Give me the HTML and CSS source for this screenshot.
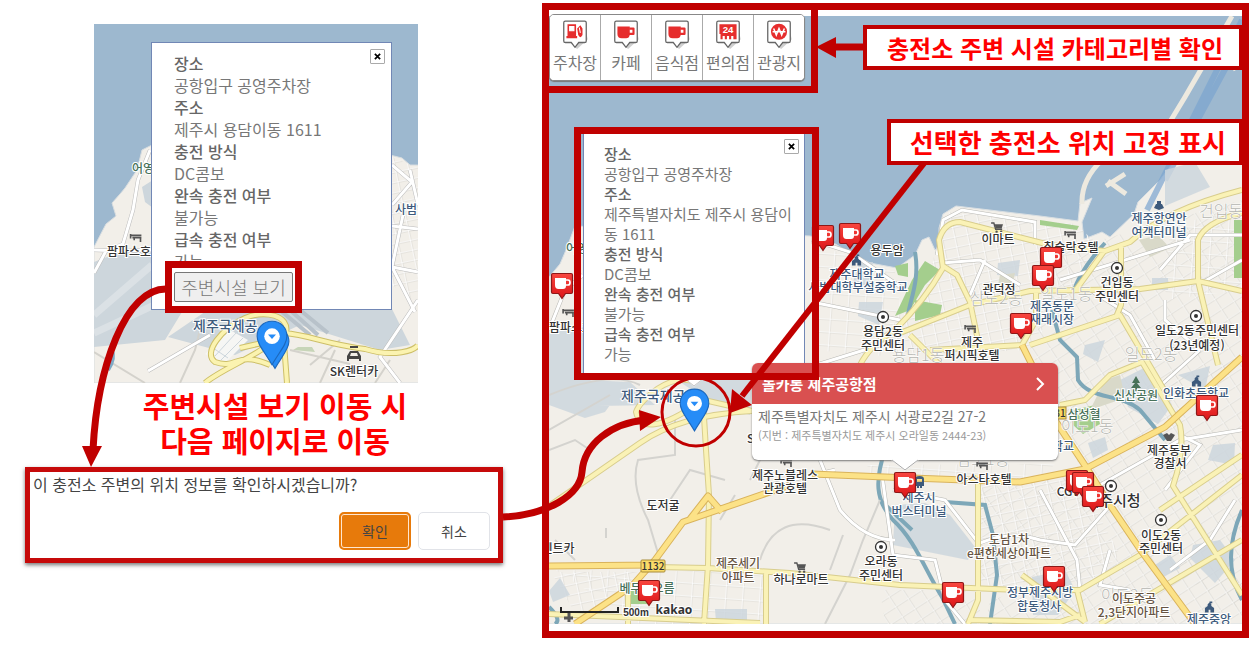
FILE: index.html
```html
<!DOCTYPE html>
<html lang="ko">
<head>
<meta charset="utf-8">
<title>충전소 주변 시설 안내</title>
<link rel="stylesheet" href="styles.css">
</head>
<body>
<svg class="defs" aria-hidden="true">
  <defs>
    <linearGradient id="red" x1="0" y1="0" x2="0" y2="1"><stop offset="0" stop-color="#f8463f"/><stop offset="1" stop-color="#dc1518"/></linearGradient>
    <pattern id="gridA" width="13" height="10" patternUnits="userSpaceOnUse" patternTransform="rotate(-12)"><path d="M0 0H13M0 0V10" stroke="#dcdad4" stroke-width="3"/><path d="M0 0H13M0 0V10" stroke="#fff" stroke-width="1.6"/></pattern>
    <pattern id="gridB" width="15" height="12" patternUnits="userSpaceOnUse" patternTransform="rotate(-33)"><path d="M0 0H15M0 0V12" stroke="#d9d7d1" stroke-width="3"/><path d="M0 0H15M0 0V12" stroke="#fbfaf8" stroke-width="1.5"/></pattern>
    <pattern id="gridC" width="17" height="13" patternUnits="userSpaceOnUse" patternTransform="rotate(4)"><path d="M0 0H17M0 0V13" stroke="#dddbd6" stroke-width="3"/><path d="M0 0H17M0 0V13" stroke="#fff" stroke-width="1.6"/></pattern>
    <symbol id="cup" viewBox="0 0 24 28" overflow="visible">
      <path d="M3 1.500H21Q22.500 1.500 22.500 3V20Q22.500 21.500 21 21.500H15.500L12 26.500L8.500 21.500H3Q1.500 21.500 1.500 20V3Q1.500 1.500 3 1.500Z" fill="url(#red)" stroke="#8e1717" stroke-width="1.200"/>
      <path d="M5 6H16V14Q16 17 13 17H8.500Q5 17 5 13Z" fill="#fff"/><path d="M16 8H18Q20 8 20 10.500Q20 13 18 13H16" fill="none" stroke="#fff" stroke-width="1.700"/>
    </symbol>
    <symbol id="office" viewBox="0 0 14 14"><circle cx="7" cy="7" r="5.500" fill="#fff" stroke="#333" stroke-width="1.300"/><circle cx="7" cy="7" r="2" fill="#333"/></symbol>
    <symbol id="bed" viewBox="0 0 14 10"><path d="M1 0V5M1 1.500H13M3 4H13M12 4V9M5 4V7" fill="none" stroke="#555" stroke-width="1.800"/></symbol>
    <symbol id="cart" viewBox="0 0 14 12"><path d="M0 1H3L5 8H12" fill="none" stroke="#555" stroke-width="1.600"/><path d="M4 2.500H13L11.500 7H5Z" fill="#555"/><circle cx="6" cy="10.500" r="1.300" fill="#555"/><circle cx="11" cy="10.500" r="1.300" fill="#555"/></symbol>
    <symbol id="school" viewBox="0 0 12 12"><path d="M1 12V7L4 5V3L6 1V0H9V2H7L8 3V5L11 7V12H7V9H5V12Z" fill="#3d5a7c"/></symbol>
    <symbol id="pin" viewBox="0 0 28 40"><path d="M14 1C6 1 1 7 1 14C1 21 7 27 14 39C21 27 27 21 27 14C27 7 22 1 14 1Z" fill="#268cf7" stroke="#1c68bd" stroke-width="1"/><circle cx="14" cy="14" r="6.800" fill="#fff"/><path d="M10.500 12.500H17.500L14 16.500Z" fill="#268cf7"/></symbol>
    <symbol id="badge" viewBox="0 0 24 28"><path d="M10 24L21 6L24 18L14 27Z" fill="#777" opacity=".35"/><path d="M3 1H21Q22.500 1 22.500 2.500V19.500Q22.500 21 21 21H15.500L12 25.500L8.500 21H3Q1.500 21 1.500 19.500V2.500Q1.500 1 3 1Z" fill="#fff" stroke="#666" stroke-width="1.200"/></symbol>
    <symbol id="beak" viewBox="0 0 30 12"><path d="M0 0H30L15 12Z" fill="#fff"/><path d="M2 1L15 11L28 1" fill="none" stroke="#aaa" stroke-width="1"/></symbol>
  </defs>
</svg>

<main class="board">
  <section class="intro">
    <div class="mini-map">
      <svg class="map-art" viewBox="94 24 324 359" preserveAspectRatio="xMinYMin slice" aria-hidden="true">
        <path d="M94 24H900V383H94Z" fill="#9db8cf"/>
        <path d="M152 145L142 150L137 170L125 188L120 194L112 203L116 216L106 224L94 247V383H900V170L410 165L402 158L390 155Z" fill="#f2efe9" stroke="#d8dde0"/>
        <path d="M392 157L418 168V305L392 285Z" fill="url(#gridA)"/>
        <path d="M94 262L125 250L152 252V290L185 307L165 340L94 347ZM142 187L153 180V208L145 202Z" fill="#cdd6dc"/>
        <path d="M94 315L152 265M94 333L165 300" stroke="#dbe1e5" stroke-width="7"/>
        <path d="M168 337L215 305H300L392 309L410 345L380 350L300 325L235 355Z" fill="#cdd6dc"/>
        <path d="M205 354L230 330L248 340L225 363Z" fill="#f6f6f4"/><path d="M215 356L236 333M221 360L243 338M210 346L228 358" stroke="#cdd6dc" stroke-width="1"/>
        <path d="M280 310L310 335M290 310L318 335M300 310L328 333" stroke="#b8c2ca" stroke-width="4"/>
        <path d="M298 347H312L315 352L293 350Z" fill="#c7d5b8"/>
        <path d="M180 383L195 350L200 330M290 350L350 364M94 352L145 383M320 383L335 350M390 360L375 383M340 340L310 365" fill="none" stroke="#d4d2cc" stroke-width="2"/>
        <path d="M150 150L138 180L133 210L123 244L106 251L94 273M94 250L123 251L151 250M148 371L210 335M392 226L418 229M392 267L418 272M403 215L392 267L415 312M418 300L380 357L400 383M392 165L412 182L392 205M410 170L418 205" fill="none" stroke="#bbb" stroke-width="4"/>
        <path d="M150 150L138 180L133 210L123 244L106 251L94 273M94 250L123 251L151 250M148 371L210 335M392 226L418 229M392 267L418 272M403 215L392 267L415 312M418 300L380 357L400 383M392 165L412 182L392 205M410 170L418 205" fill="none" stroke="#fff" stroke-width="3"/>
        <path d="M205 383C225 366 270 352 278 333M270 365C235 350 238 370 215 362C202 353 222 328 245 318C265 310 290 315 286 333L280 345M283 330L287 383M284 333C310 335 325 344 365 349C395 358 415 350 418 345M240 348L275 340" fill="none" stroke="#cdbf68" stroke-width="6"/>
        <path d="M205 383C225 366 270 352 278 333M270 365C235 350 238 370 215 362C202 353 222 328 245 318C265 310 290 315 286 333L280 345M283 330L287 383M284 333C310 335 325 344 365 349C395 358 415 350 418 345M240 348L275 340" fill="none" stroke="#fbf3b0" stroke-width="4"/>
        <path d="M108 370Q116 358 111 348" stroke="#7fa9c5" stroke-width="4" fill="none"/>
        <g class="label">
          <text x="132" y="173" class="green start">어영</text><use href="#bed" x="129" y="234" width="14" height="9"/>
          <text x="107" y="256" class="start">팜파스호</text><text x="395" y="214" class="navy start">사범</text>
          <text x="193" y="331" class="navy start big">제주국제공</text><text x="354" y="376">SK렌터카</text>
          <path d="M347 361V356L350 351H358L361 356V361H359V359H349V361ZM351 353L350 356H358L357 353ZM350 346H358V348H350Z" fill="#444" fill-rule="evenodd"/>
        </g>
        <use href="#pin" x="260" y="325" width="30" height="46"/><use href="#pin" x="256" y="318" width="32" height="50"/>
      </svg>
      <article class="popup popup-small">
        <button class="close" type="button" aria-label="닫기"><svg viewBox="0 0 8 8"><path d="M1 1L7 7M7 1L1 7"/></svg></button>
        <dl>
          <dt>장소</dt><dd>공항입구 공영주차장</dd><dt>주소</dt><dd>제주시 용담이동 1611</dd><dt>충전 방식</dt><dd>DC콤보</dd><dt>완속 충전 여부</dt><dd>불가능</dd><dt>급속 충전 여부</dt><dd>가능</dd>
        </dl>
        <div class="focus"><button type="button">주변시설 보기</button></div>
      </article>
    </div>
    <h1>주변시설 보기 이동 시<br>다음 페이지로 이동</h1>
    <div class="dialog" role="dialog" aria-labelledby="question">
      <p id="question">이 충전소 주변의 위치 정보를 확인하시겠습니까?</p>
      <div class="actions"><button class="ok" type="button">확인</button><button class="cancel" type="button">취소</button></div>
    </div>
  </section>

  <section class="explorer">
    <div class="main-map">
      <svg class="map-art" viewBox="549 16 693 608" preserveAspectRatio="xMinYMin slice" aria-hidden="true">
        <path d="M549 16H2000V624H549Z" fill="#9db8cf"/>
        <path d="M549 277L560 264L566 250L575 226L810 236L827 239L842 248L870 263L897 268L915 255L922 240L929 237L935 250L939 246V228L943 214L956 206L1040 216L1078 221L1080 203L1092 198L1082 222L1084 239L1102 232L1110 237L1134 214L1138 202L1160 180L1172 164H2000V624H549Z" fill="#f2efe9" stroke="#d8dee2"/>
        <path d="M1232 16L1185 97L1165 130M1230 60L1236 70M1102 160Q1081 180 1082 204M1108 181L1126 194M1125 174L1106 186" fill="none" stroke="#ede9df" stroke-width="5"/>
        <path d="M1242 20L1147 210M1230 60L1165 180" stroke="#7ba5d0" stroke-width="6" opacity=".7"/>
        <path d="M812 243L895 272L908 358L812 350Z" fill="url(#gridC)"/>
        <path d="M945 212L1075 224L1100 246L1030 350L900 355L888 330L925 293Z" fill="url(#gridA)"/>
        <path d="M1065 250L1242 200V360L1165 400L1060 410L1030 350Z" fill="url(#gridB)"/>
        <path d="M1170 225L1242 210V290L1165 300Z" fill="url(#gridC)"/>
        <path d="M1058 405L1242 360V610L1150 560L1080 585L980 580V490L1080 470Z" fill="url(#gridB)"/>
        <path d="M975 482L1080 480L1120 555L1080 590L978 585Z" fill="url(#gridA)"/>
        <path d="M867 465L1055 464L1040 480L870 475Z" fill="url(#gridC)"/>
        <path d="M555 570L765 572V624H640Z" fill="url(#gridC)"/><path d="M551 572H650L580 622Z" fill="url(#gridA)"/>
        <path d="M880 590H980V624H885ZM990 600L1170 550L1242 580V624H985Z" fill="url(#gridB)"/>
        <path d="M549 333L585 326V380L630 382L655 405L597 406L600 411L549 405ZM549 405L585 373L610 405L605 412L585 418ZM700 378L752 380L750 415L710 402L680 382ZM860 262H873L870 290H850ZM859 302H883L879 325L858 316ZM998 263L1020 260L1018 276L997 275ZM1085 345L1105 340L1098 362L1083 354ZM1152 278H1168V290H1152ZM1120 380L1150 365L1172 405L1158 424L1128 407ZM1178 375L1210 366L1205 390ZM1088 443L1105 437L1108 450L1093 458ZM1213 445L1235 443L1234 465L1208 460ZM895 505L925 503L950 515L975 547L968 560L893 545ZM1032 577L1065 570L1075 590L1058 615H1033ZM1193 545L1220 540L1235 560L1215 583L1190 558ZM549 591L560 578L570 595L553 602ZM715 609H747V622H716ZM1155 565L1170 555L1180 568L1163 577ZM1165 170L1195 162L1210 187L1165 206Z" fill="#ccd6dd" opacity=".85"/>
        <path d="M925 261L940 270L925 285L910 310L895 316L912 280ZM915 300L942 305L940 315L915 321ZM1040 220L1079 226L1077 230L1040 225ZM1234 220H2000V278H1234ZM1074 410L1095 405L1100 424L1083 434L1073 425ZM630 590H648V604H630ZM895 266L908 263V277L898 275Z" fill="#a4ce8d"/>
        <path d="M1105 380L1120 375L1125 398L1090 410ZM1000 275L1015 273L1012 285H998ZM1139 240L1158 235L1170 248L1150 257Z" fill="#d9d9c9"/>
        <path d="M915 252C920 280 910 300 908 315M1105 243Q1080 270 1073 293M1052 310L1060 340L1077 357L1078 380C1090 400 1120 393 1140 410L1165 440M885 450C875 480 875 500 893 520C915 540 925 570 942 597L955 624M945 502L985 505L993 535L997 575L990 624M1242 510Q1220 560 1242 600M549 607Q562 620 555 624M880 500L912 530" fill="none" stroke="#7da7b8" stroke-width="4"/>
        <path d="M549 430L610 395M549 450L575 440L590 450M675 415V455L638 460Q630 485 648 520L660 560M549 395Q610 370 640 385M606 528V538M735 495L720 520M830 530Q775 510 760 560M843 535L830 570M880 500L863 540L850 575L825 624M575 560L555 540M725 480L690 470L670 500M765 450L750 480" fill="none" stroke="#d4d3cf" stroke-width="2"/>
        <path d="M549 330L565 290L583 275M812 240L850 252L905 290M812 302L900 320M985 260L970 295M1035 245V222L962 210L943 220L937 255M1020 285L980 260L942 263M1090 290L1130 315L1155 360M1060 280L1190 240M1160 270L1190 235H1242M1165 300V320L1200 350M1205 281L1242 260M1200 350L1150 395M800 370L890 342M820 460L840 510Q865 540 895 540M882 475L893 555L935 560L945 600L965 624M893 490L945 500L980 545M980 543Q1010 530 1040 540L1075 545L1115 500M1040 490L1077 560L1080 590M1100 485L1180 440L1242 430M1180 435L1200 445L1165 490M1110 550L1100 585L1130 590M1170 570L1210 540L1235 500M770 485L835 470" fill="none" stroke="#b8b8b4" stroke-width="4"/>
        <path d="M549 330L565 290L583 275M812 240L850 252L905 290M812 302L900 320M985 260L970 295M1035 245V222L962 210L943 220L937 255M1020 285L980 260L942 263M1090 290L1130 315L1155 360M1060 280L1190 240M1160 270L1190 235H1242M1165 300V320L1200 350M1205 281L1242 260M1200 350L1150 395M800 370L890 342M820 460L840 510Q865 540 895 540M882 475L893 555L935 560L945 600L965 624M893 490L945 500L980 545M980 543Q1010 530 1040 540L1075 545L1115 500M1040 490L1077 560L1080 590M1100 485L1180 440L1242 430M1180 435L1200 445L1165 490M1110 550L1100 585L1130 590M1170 570L1210 540L1235 500M770 485L835 470" fill="none" stroke="#fff" stroke-width="3"/>
        <g fill="none" stroke-linejoin="round">
          <path d="M549 506L640 443Q680 415 752 411M703 400L706 450L709 495L708 565L704 624M695 382C670 372 640 400 636 412C640 430 660 430 700 402M704 400L752 411M860 365Q870 345 895 330Q925 300 943 268L939 240Q944 222 960 222L1050 245L1105 251L1130 242Q1165 210 1242 190M943 266L957 275L970 302L980 350M895 335L970 305L1030 291L1140 289L1198 281L1242 291M1036 291V320L1022 345L930 350M910 335L940 365M1030 345L1120 315L1170 400M1105 250L1075 291M1121 245V305L1116 317M1198 281V240Q1205 222 1242 213M1198 281L1218 365M1060 405L1085 400L1110 375L1142 362L1180 425Q1185 450 1173 486L1242 595M978 475V600L968 624M655 567L708 568L790 573L900 585L1020 590H1080L1140 555L1242 475M1022 575L1085 622M1077 590L1085 622M968 620L1060 622L1080 615M1100 624L1242 540M549 614L760 623M628 590V624M766 570V624M1160 510L1242 455" stroke="#d8cd8d" stroke-width="6"/>
          <path d="M549 506L640 443Q680 415 752 411M703 400L706 450L709 495L708 565L704 624M695 382C670 372 640 400 636 412C640 430 660 430 700 402M704 400L752 411M860 365Q870 345 895 330Q925 300 943 268L939 240Q944 222 960 222L1050 245L1105 251L1130 242Q1165 210 1242 190M943 266L957 275L970 302L980 350M895 335L970 305L1030 291L1140 289L1198 281L1242 291M1036 291V320L1022 345L930 350M910 335L940 365M1030 345L1120 315L1170 400M1105 250L1075 291M1121 245V305L1116 317M1198 281V240Q1205 222 1242 213M1198 281L1218 365M1060 405L1085 400L1110 375L1142 362L1180 425Q1185 450 1173 486L1242 595M978 475V600L968 624M655 567L708 568L790 573L900 585L1020 590H1080L1140 555L1242 475M1022 575L1085 622M1077 590L1085 622M968 620L1060 622L1080 615M1100 624L1242 540M549 614L760 623M628 590V624M766 570V624M1160 510L1242 455" stroke="#faf2b6" stroke-width="4"/>
          <path d="M549 566L655 565M575 624L632 586L655 560L683 522L790 485M690 519L708 496L722 512M812 474L885 477L1020 482L1085 469L1165 427L1242 357M1045 405L1088 470L1110 505L1142 552L1195 624M1022 345L1032 365" stroke="#d9b35c" stroke-width="7"/>
          <path d="M549 566L655 565M575 624L632 586L655 560L683 522L790 485M690 519L708 496L722 512M812 474L885 477L1020 482L1085 469L1165 427L1242 357M1045 405L1088 470L1110 505L1142 552L1195 624M1022 345L1032 365" stroke="#fce287" stroke-width="5"/>
        </g>
        <g class="ghost"><text x="996" y="304">삼도2동</text><text x="1066" y="300">일도1동</text><text x="918" y="361">용담1동</text><text x="1151" y="360">일도2동</text><text x="1221" y="217">건입동</text><text x="1087" y="432">이도1동</text><text x="1127" y="601">이도2동</text><text x="983" y="465">삼도1동</text></g>
        <g class="label">
          <text x="566" y="253" class="green start">어영</text><use href="#bed" x="562" y="309" width="13" height="9"/><text x="571" y="332">팜파스호</text>
          <text x="887" y="255">용두암</text><use href="#school" x="851" y="254" width="11" height="12"/><text x="857" y="279" class="navy">제주대학교</text><text x="858" y="292" class="navy">사범대학부설중학교</text>
          <use href="#office" x="876" y="310" width="14" height="14"/><text x="883" y="336">용담2동</text><text x="883" y="350">주민센터</text>
          <use href="#cart" x="991" y="222" width="13" height="11"/><text x="998" y="244">이마트</text><use href="#bed" x="1064" y="231" width="13" height="9"/><text x="1071" y="252">칠슬락호텔</text>
          <text x="999" y="294">관덕정</text><text x="1052" y="311" class="navy">제주동문</text><text x="1052" y="324" class="navy">재래시장</text>
          <use href="#bed" x="964" y="325" width="13" height="9"/><text x="972" y="347">제주</text><text x="972" y="360">퍼시픽호텔</text>
          <path d="M1154 208L1159 210L1164 208L1162 204H1156ZM1157 201H1161V204H1157Z" fill="#3d5a7c"/><text x="1159" y="223" class="navy">제주항연안</text><text x="1159" y="237" class="navy">여객터미널</text>
          <use href="#office" x="1110" y="261" width="14" height="14"/><text x="1117" y="287">건입동</text><text x="1117" y="301">주민센터</text>
          <use href="#office" x="1189" y="309" width="14" height="14"/><text x="1197" y="335">일도2동주민센터</text><text x="1197" y="350">(23년예정)</text>
          <text x="621" y="401" class="navy start big">제주국제공</text><text x="747" y="443" class="start">SK렌터카</text><use href="#bed" x="780" y="459" width="13" height="9"/>
          <text x="785" y="480">제주노블레스</text><text x="785" y="493">관광호텔</text><text x="663" y="510">도저굴</text><text x="558" y="553">렌트카</text>
          <path d="M1136 376L1132 383H1135L1131 388H1135V391H1137V388H1141L1137 383H1140Z" fill="#477159"/><text x="1136" y="400" class="green">신산공원</text><use href="#school" x="1191" y="375" width="11" height="12"/><text x="1196" y="398" class="navy">인화초등학교</text>
          <rect x="1050" y="407" width="16" height="12" fill="#f8da62" stroke="#a98c3a"/><text x="1060" y="417" class="road">31</text><text x="1084" y="419" class="green">삼성혈</text><text x="1063" y="451" class="navy">학교</text>
          <path d="M1163 435L1167 433L1169 435L1171 433L1175 435L1171 441H1167Z" fill="#555"/><text x="1169" y="455">제주동부</text><text x="1170" y="468">경찰서</text>
          <use href="#bed" x="976" y="462" width="13" height="9"/><text x="984" y="484">아스타호텔</text><text x="1068" y="496">CGV</text><use href="#office" x="1104" y="479" width="14" height="14"/><text x="1113" y="506" class="large">제주시청</text>
          <path d="M915 479Q915 476 919.500 476Q924 476 924 479V486H922V488H920V486H919V488H917V486H915ZM917 479V482H922V479Z" fill="#3d5a7c" fill-rule="evenodd"/><text x="919" y="502" class="navy">제주시</text><text x="919" y="516" class="navy">버스터미널</text>
          <use href="#office" x="874" y="540" width="14" height="14"/><text x="881" y="566">오라동</text><text x="881" y="580">주민센터</text>
          <use href="#office" x="1154" y="513" width="14" height="14"/><text x="1161" y="540">이도2동</text><text x="1161" y="553">주민센터</text>
          <text x="1009" y="544" class="brown">도남1차</text><text x="1009" y="558" class="brown">e편한세상아파트</text><text x="738" y="568" class="brown">제주세기</text><text x="738" y="582" class="brown">아파트</text>
          <use href="#cart" x="794" y="562" width="13" height="11"/><text x="801" y="584">하나로마트</text><text x="1040" y="597" class="navy">정부제주지방</text><text x="1039" y="611" class="navy">합동청사</text>
          <text x="1134" y="603" class="brown">이도주공</text><text x="1134" y="617" class="brown">2,3단지아파트</text><use href="#school" x="1204" y="601" width="11" height="12"/><text x="1209" y="624" class="navy">제주중앙</text>
          <rect x="641" y="560" width="24" height="12" rx="1" fill="#fadb68" stroke="#a98c3a"/><text x="653" y="570" class="road">1132</text><text x="647" y="593" class="green">베두리오름</text>
          <text x="636" y="616" class="scale">500m</text><text x="674" y="614" class="kakao">kakao</text><path d="M569 613V622M564 618H573" stroke="#555" stroke-width="3"/><path d="M561 607V612H618V607" fill="none" stroke="#222" stroke-width="2"/>
        </g>
        <g>
          <use href="#cup" x="811" y="224" width="24" height="28"/><use href="#cup" x="838" y="222" width="24" height="28"/><use href="#cup" x="550" y="272" width="24" height="28"/>
          <use href="#cup" x="1039" y="246" width="24" height="28"/><use href="#cup" x="1031" y="264" width="24" height="28"/><use href="#cup" x="1009" y="312" width="24" height="28"/>
          <use href="#cup" x="1195" y="394" width="24" height="28"/><use href="#cup" x="893" y="471" width="24" height="28"/><use href="#cup" x="1065" y="469" width="24" height="28"/><use href="#cup" x="1071" y="471" width="24" height="28"/><use href="#cup" x="1081" y="485" width="24" height="28"/>
          <use href="#cup" x="637" y="579" width="24" height="28"/><use href="#cup" x="941" y="581" width="24" height="28"/><use href="#cup" x="1042" y="565" width="24" height="28"/>
        </g>
        <use href="#beak" x="684" y="376" width="20" height="13"/><use href="#pin" x="679" y="388" width="31" height="44"/>
      </svg>
      <nav class="categories" aria-label="주변 시설">
        <button type="button"><svg viewBox="0 0 24 28"><use href="#badge"/><path d="M5 4H13V15H14V17H4V15H5ZM14 8L17 5L19 8V14Q17 18 15 14L14 8" fill="#e62d2d"/><path d="M7 6H11V10H7ZM16 7L17 12" fill="#fff" stroke="#fff"/></svg>주차장</button>
        <button type="button"><svg viewBox="0 0 24 28"><use href="#badge"/><path d="M4 6H15.500V13Q15.500 17 12 17H8Q4 17 4 13Z" fill="#e62d2d"/><path d="M15 8H19V13H14.500" fill="none" stroke="#e62d2d" stroke-width="2" stroke-linejoin="round"/></svg>카페</button>
        <button type="button"><svg viewBox="0 0 24 28"><use href="#badge"/><path d="M4 6H15.500V13Q15.500 17 12 17H8Q4 17 4 13Z" fill="#e62d2d"/><path d="M15 8H19V13H14.500" fill="none" stroke="#e62d2d" stroke-width="2" stroke-linejoin="round"/></svg>음식점</button>
        <button type="button"><svg viewBox="0 0 24 28"><use href="#badge"/><path d="M4 4H20V18H17V15H15V18H13V15H11V18H9V15H7V18H5V13H4Z" fill="#e62d2d"/><text x="12" y="12" class="day">24</text></svg>편의점</button>
        <button type="button"><svg viewBox="0 0 24 28"><use href="#badge"/><circle cx="12" cy="11" r="7.500" fill="#e62d2d"/><path d="M7 8L9.500 14L12 8L14.500 14L17 8M6 11H18" fill="none" stroke="#fff" stroke-width="1.400"/></svg>관광지</button>
      </nav>
      <article class="popup popup-main">
        <button class="close" type="button" aria-label="닫기"><svg viewBox="0 0 8 8"><path d="M1 1L7 7M7 1L1 7"/></svg></button>
        <dl><dt>장소</dt><dd>공항입구 공영주차장</dd><dt>주소</dt><dd>제주특별자치도 제주시 용담이<br>동 1611</dd><dt>충전 방식</dt><dd>DC콤보</dd><dt>완속 충전 여부</dt><dd>불가능</dd><dt>급속 충전 여부</dt><dd>가능</dd></dl>
      </article>
      <article class="place">
        <h2><a href="#place">돌카롱 제주공항점<svg viewBox="0 0 10 16" aria-hidden="true"><path d="M2 2L8 8L2 14"/></svg></a></h2>
        <p>제주특별자치도 제주시 서광로2길 27-2</p><small>(지번 : 제주특별자치도 제주시 오라일동 2444-23)</small>
        <svg class="tail" viewBox="0 0 30 12" aria-hidden="true"><use href="#beak"/></svg>
      </article>
      <div class="mark mark-categories"></div><div class="mark mark-popup"></div>
    </div>
  </section>
  <svg class="arrows" aria-hidden="true">
    <g fill="none" stroke="#c00000">
      <path d="M168 289C125 286 97 370 93 450" stroke-width="7"/><path d="M503 517C548 515 580 495 582 472C584 444 611 423 646 420" stroke-width="7"/>
      <path d="M925 162L742 396" stroke-width="6"/><path d="M863 47H832" stroke-width="7"/><circle cx="696" cy="412" r="34" stroke-width="3"/>
    </g>
    <path d="M82 446H102L91 467ZM639 410L640 431L661 417ZM732 389L752 405L730 413ZM816 47L836 37V58Z" fill="#c00000"/>
  </svg>
  <div class="notes"><p class="note note-long">충전소 주변 시설 카테고리별 확인</p><p class="note note-short">선택한 충전소 위치 고정 표시</p></div>
</main>
</body>
</html>
```
FILE: styles.css
```css
* { box-sizing: border-box; }
body { margin: 0; background: #fff; color: #777; font-family: "Noto Sans CJK KR", sans-serif; }
button { font: inherit; color: inherit; padding: 0; }
h1, h2, p, dl, dd { margin: 0; }
.defs { position: absolute; width: 0; height: 0; }

.board { position: relative; display: grid; grid-template-columns: 542px minmax(0, 1fr); align-items: start; padding: 3px 11px 9px 0; }
.intro { padding: 21px 39px 0 25px; }
.mini-map { position: relative; height: 359px; margin: 0 85px 0 69px; }
.map-art { display: block; width: 100%; height: 100%; }

.label text { font-size: 12px; fill: #333; text-anchor: middle; paint-order: stroke; stroke: #fff; stroke-width: 2px; font-weight: 500; }
.label .navy { fill: #3d5a7c; }
.label .green { fill: #477159; }
.label .brown { fill: #665443; }
.label .start { text-anchor: start; }
.label .big { font-size: 14px; }
.label .large { font-size: 15px; }
.label .road { font-size: 10px; stroke: none; }
.label .scale { font: bold 10px "Liberation Sans", sans-serif; }
.label .kakao { font: bold 12px "Noto Sans", sans-serif; }
.ghost text { font-size: 16px; fill: #b5b5b0; text-anchor: middle; paint-order: stroke; stroke: #fff; stroke-width: 1px; font-weight: 300; }

.popup { position: absolute; background: #fff; border: 1px solid #7187b5; }
.popup dt { font-weight: 500; color: #666; }
.popup dd { font-weight: 400; }
.popup-small { top: 18px; left: 57px; width: 241px; padding: 9px 0 0 22px; font-size: 16px; line-height: 22px; }
.popup-main { top: 117px; left: 34px; width: 222px; padding: 10px 0 12px 20px; font-size: 15px; line-height: 20px; }
.close { position: absolute; top: 6px; right: 6px; width: 15px; height: 15px; border: 1px solid #aaa; border-radius: 1px; background: #fff; display: grid; place-items: center; }
.popup-main .close { top: 5px; right: 5px; }
.close svg { width: 7px; height: 7px; fill: none; stroke: #000; stroke-width: 2px; }
.focus { position: relative; width: 137px; height: 52px; margin: -11px 0 -4px -9px; padding: 4px 2px; background: #fff; border: 7px solid #c00000; }
.focus button { width: 100%; height: 30px; border: 1px solid #777; border-radius: 2px; background: #efefef; font-size: 18px; line-height: 26px; font-weight: 300; }

h1 { padding: 5px 0 0 22px; color: #f00; font-size: 29px; line-height: 35px; font-weight: 700; text-align: center; }
.dialog { margin-top: 9px; padding: 0 8px 7px 3px; min-height: 96px; border: 5px solid #c60a0a; box-shadow: 0 2px 4px #777; color: #444; }
.dialog p { font-size: 16px; line-height: 24px; font-weight: 400; white-space: nowrap; }
.actions { display: flex; justify-content: flex-end; gap: 7px; margin-top: 16px; }
.actions button { width: 72px; height: 38px; border: 1px solid #e1e3e8; border-radius: 5px; background: #fff; font-size: 14px; }
.actions .ok { border: 2px solid #e77a0b; background: #e77a0b; box-shadow: inset 0 0 0 1px #ffe6cf; }

.explorer { border: 7px solid #c00000; padding: 6px 0 7px; }
.main-map { position: relative; height: 608px; }
.categories { position: absolute; top: -2px; left: 0; display: flex; width: 256px; height: 67px; overflow: hidden; background: #fff; border: 1px solid #888; border-radius: 5px; box-shadow: 0 1px 1px #777; }
.categories button { flex: 1; display: flex; flex-direction: column; align-items: center; padding-top: 5px; border: 0; border-right: 1px solid #aaa; background: #fff; font-size: 16px; line-height: 24px; font-weight: 400; white-space: nowrap; }
.categories button:last-child { border-right: 0; }
.categories svg { width: 26px; height: 30px; }
.day { fill: #fff; font: bold 9px "Liberation Sans", sans-serif; text-anchor: middle; }

.place { position: absolute; top: 347px; left: 203px; width: 306px; height: 97px; background: #fff; border-radius: 6px; box-shadow: 0 1px 2px #777; white-space: nowrap; }
.place h2 { height: 41px; padding: 0 13px 0 10px; border-radius: 6px 6px 0 0; background: #d95050; font-size: 15px; line-height: 41px; font-weight: 700; }
.place a { display: flex; justify-content: space-between; align-items: center; color: #fff; text-decoration: none; }
.place a svg { width: 10px; height: 16px; fill: none; stroke: #fff; stroke-width: 2px; }
.place p { padding: 2px 6px 0; font-size: 14px; line-height: 20px; font-weight: 400; }
.place small { display: block; padding-left: 6px; color: #999; font-size: 11px; line-height: 18px; font-weight: 400; }
.tail { position: absolute; left: 138px; bottom: -11px; width: 30px; height: 12px; }
.mark { position: absolute; border: 7px solid #c00000; pointer-events: none; }
.mark-categories { top: -13px; left: -7px; width: 276px; height: 90px; }
.mark-popup { top: 111px; left: 25px; width: 245px; height: 253px; }

.arrows { position: absolute; top: 0; left: 0; width: 100%; height: 100%; pointer-events: none; }
.notes { position: absolute; top: 25px; right: 17px; display: grid; justify-items: end; gap: 49px; color: #f00; font-weight: 700; }
.note { border: 4px solid #c00000; background: #fff; white-space: nowrap; }
.note-long { padding: 0 16px 0 20px; font-size: 24px; line-height: 37px; }
.note-short { padding: 0 13px 0 19px; font-size: 26px; line-height: 38px; }
```
